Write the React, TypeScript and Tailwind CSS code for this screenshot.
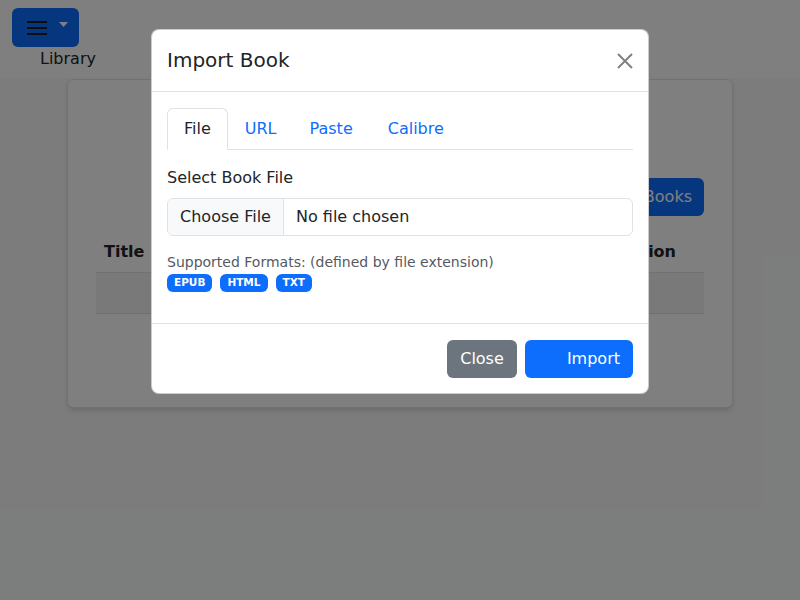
import React from "react";

export default function App() {
  const font = { fontFamily: '"DejaVu Sans", "Liberation Sans", sans-serif' };
  return (
    <div className="relative w-[800px] h-[600px] overflow-hidden bg-white text-[#212529]" style={font}>
      {/* underlying page */}
      <div className="h-[78px] bg-white">
        <div className="pt-2 pl-3">
          <div className="w-[67px] h-[39px] rounded-md bg-[#0d6efd] flex items-center pl-[15px] gap-[12px]">
            <svg width="20" height="16" viewBox="0 0 20 16">
              <rect x="0" y="1" width="20" height="2" fill="#1a1a1a" />
              <rect x="0" y="7" width="20" height="2" fill="#1a1a1a" />
              <rect x="0" y="13" width="20" height="2" fill="#1a1a1a" />
            </svg>
            <svg width="9" height="5" viewBox="0 0 9 5" className="-mt-[6px]">
              <path d="M0 0 L9 0 L4.5 5 Z" fill="#ffffff" />
            </svg>
          </div>
          <div className="ml-[28px] text-base leading-6">Library</div>
        </div>
      </div>
      <div className="h-[522px] bg-[#f8f9fa] pt-[2px]">
        <div className="ml-[67px] w-[666px] h-[329px] -mt-px bg-white rounded-md border border-[#dee2e6] shadow-md px-[28px] pt-[98px]">
          <div className="flex justify-end">
            <div className="h-[38px] px-3 rounded-md bg-[#0d6efd] text-white flex items-center text-base">Import Books</div>
          </div>
          <div className="mt-[19px] flex justify-between font-bold text-base h-[38px] items-center pb-[4px] pl-2 pr-[28px] border-b border-[#dee2e6]">
            <span>Title</span>
            <span>Action</span>
          </div>
          <div className="h-[41px] bg-[#f2f2f2] border-b border-[#dee2e6]"></div>
        </div>
      </div>

      {/* backdrop */}
      <div className="absolute inset-0 bg-black/50"></div>

      {/* modal */}
      <div className="absolute left-[151px] top-[29px] w-[498px] h-[365px] bg-white rounded-lg border border-black/20 flex flex-col">
        <div className="h-[62px] flex items-center justify-between pl-[15px] pr-[15px] border-b border-[#dee2e6]">
          <div className="text-[20px] leading-[30px] text-[#212529] -mt-[2px]">Import Book</div>
          <svg width="16" height="16" viewBox="0 0 16 16">
            <path d="M1 1 L15 15 M15 1 L1 15" stroke="#808080" strokeWidth="2" />
          </svg>
        </div>
        <div className="px-[15px] pt-4 h-[231px]">
          <div className="flex border-b border-[#dee2e6] h-[42px] text-base">
            <div className="px-4 flex items-center border border-[#dee2e6] border-b-white rounded-t-md bg-white text-[#212529] -mb-px">File</div>
            <div className="pl-[17px] pr-4 flex items-center text-[#0d6efd]">URL</div>
            <div className="pl-[17px] pr-4 flex items-center text-[#0d6efd]">Paste</div>
            <div className="pl-[19px] pr-4 flex items-center text-[#0d6efd]">Calibre</div>
          </div>
          <div className="mt-[16px] text-base leading-6">Select Book File</div>
          <div className="mt-[8px] h-[38px] flex border border-[#dee2e6] rounded-md overflow-hidden text-base">
            <div className="w-[116px] bg-[#f8f9fa] border-r border-[#dee2e6] flex items-center justify-center">Choose File</div>
            <div className="flex items-center pl-3">No file chosen</div>
          </div>
          <div className="mt-[16px] text-[14px] leading-[20px] text-[#555a5f]">Supported Formats: (defined by file extension)</div>
          <div className="flex gap-2 mt-[2px]">
            {["EPUB", "HTML", "TXT"].map((t) => (
              <span key={t} className="h-[18px] px-[7px] rounded-md bg-[#0d6efd] text-white text-[10.5px] font-bold flex items-center">
                {t}
              </span>
            ))}
          </div>
        </div>
        <div className="flex-1 border-t border-[#dee2e6] flex items-center justify-end gap-2 pr-[15px]">
          <div className="h-[38px] w-[70px] rounded-md bg-[#6c757d] text-white flex items-center justify-center text-base">Close</div>
          <div className="h-[38px] w-[108px] rounded-md bg-[#0d6efd] text-white flex items-center justify-end pr-[13px] text-base">Import</div>
        </div>
      </div>
    </div>
  );
}
